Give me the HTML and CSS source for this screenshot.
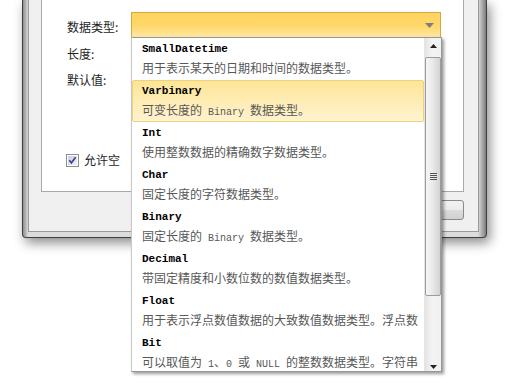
FILE: index.html
```html
<!DOCTYPE html>
<html lang="zh-CN">
<head>
  <meta charset="UTF-8" />
  <title>数据类型</title>
  <link rel="stylesheet" href="styles.css">
</head>
<body>
  <div class="scene">
    <div class="window">
      <div class="client">
        <div class="group">
          <div class="fields">
            <div class="lbl first">数据类型:</div>
            <div class="combo-cell">
              <div class="combo">
                <svg class="combo-arrow" width="9" height="5" viewBox="0 0 9 5"><polygon points="0,0 9,0 4.5,5" fill="#7d7d7d"/></svg>
              </div>

              <!-- open drop-down list -->
              <div class="dropdown">
                <div class="list">
                  <div class="item">
                    <div class="title">SmallDatetime</div>
                    <div class="desc">用于表示某天的日期和时间的数据类型。</div>
                  </div>
                  <div class="item sel">
                    <div class="title">Varbinary</div>
                    <div class="desc">可变长度的<span class="m"> Binary </span>数据类型。</div>
                  </div>
                  <div class="item">
                    <div class="title">Int</div>
                    <div class="desc">使用整数数据的精确数字数据类型。</div>
                  </div>
                  <div class="item">
                    <div class="title">Char</div>
                    <div class="desc">固定长度的字符数据类型。</div>
                  </div>
                  <div class="item">
                    <div class="title">Binary</div>
                    <div class="desc">固定长度的<span class="m"> Binary </span>数据类型。</div>
                  </div>
                  <div class="item">
                    <div class="title">Decimal</div>
                    <div class="desc">带固定精度和小数位数的数值数据类型。</div>
                  </div>
                  <div class="item">
                    <div class="title">Float</div>
                    <div class="desc">用于表示浮点数值数据的大致数值数据类型。浮点数</div>
                  </div>
                  <div class="item">
                    <div class="title">Bit</div>
                    <div class="desc">可以取值为<span class="m"> 1</span>、<span class="m">0 </span>或<span class="m"> NULL </span>的整数数据类型。字符串</div>
                  </div>
                </div>
                <div class="sb">
                  <div class="sb-btn up">
                    <svg width="7" height="4" viewBox="0 0 7 4"><polygon points="3.5,0 7,4 0,4" fill="#222"/></svg>
                  </div>
                  <div class="sb-thumb">
                    <svg width="7" height="8" viewBox="0 0 7 8">
                      <path d="M0 0.5H7M0 2.5H7M0 4.5H7M0 6.5H7" stroke="#555" stroke-width="1"/>
                    </svg>
                  </div>
                  <div class="sb-fill"></div>
                  <div class="sb-btn down">
                    <svg width="7" height="4" viewBox="0 0 7 4"><polygon points="0,0 7,0 3.5,4" fill="#222"/></svg>
                  </div>
                </div>
              </div>
            </div>
            <div class="lbl">长度:</div>
            <div></div>
            <div class="lbl">默认值:</div>
            <div></div>
          </div>

          <div class="check-row">
            <svg class="checkbox" width="13" height="13" viewBox="0 0 13 13">
              <defs>
                <linearGradient id="cb" x1="0" y1="0" x2="1" y2="1">
                  <stop offset="0" stop-color="#c6cbe0"/>
                  <stop offset="1" stop-color="#f2f3fa"/>
                </linearGradient>
              </defs>
              <rect x="0.5" y="0.5" width="12" height="12" fill="#fff" stroke="#8e8f8f"/>
              <rect x="2" y="2" width="9" height="9" fill="url(#cb)"/>
              <path d="M3.3 6.3 L5.4 8.8 L9.6 3.2" fill="none" stroke="#45438f" stroke-width="1.7"/>
            </svg>
            <span>允许空</span>
          </div>
        </div>

        <div class="buttons">
          <div class="btn"></div>
        </div>
      </div>
    </div>
  </div>
</body>
</html>
```

FILE: styles.css
```css
* {
  box-sizing: border-box;
}
body {
  margin: 0;
  background: #fff;
  font-family: "Noto Sans CJK SC", sans-serif;
  font-size: 12px;
  color: #1e1e1e;
  overflow: hidden;
}
.scene {
  position: relative;
  width: 520px;
  height: 383px;
}

/* dialog frame */
.window {
  margin-left: 22px;
  width: 465px;
  height: 238px;
  border: 1px solid #3f3f3f;
  border-top: none;
  border-radius: 0 0 4px 4px;
  background: linear-gradient(to right, #8e8e8e 0, #c8c8c8 4px, #dcdcdc 5px, #dcdcdc calc(100% - 8px), #a2a2a2 calc(100% - 3px), #7c7c7c 100%);
  padding: 0 7px 5px 5px;
  box-shadow: 3px 5px 12px rgba(0,0,0,0.45);
}
.client {
  height: 100%;
  border: 1px solid #9a9a9a;
  border-top: none;
  background: #f0f0f0;
  padding: 0 14px 0 12px;
  display: flex;
  flex-direction: column;
}
.group {
  height: 192px;
  border: 1px solid #a9a9a9;
  border-top: none;
  background: #fff;
  padding: 12px 0 0 25px;
}
.fields {
  display: grid;
  grid-template-columns: 64px 310px;
  grid-template-rows: 34px 26px 26px;
  align-items: start;
}
.lbl {
  line-height: 16px;
}
.lbl.first {
  padding-top: 7px;
}

/* combobox */
.combo-cell {
  position: relative;
}
.combo {
  height: 26px;
  border: 1px solid #d3a849;
  background: linear-gradient(#ffd35d, #ffd86b 55%, #ffe7a3);
  display: flex;
  align-items: center;
  justify-content: flex-end;
  padding-right: 6px;
}
.combo-arrow {
  margin-top: 1px;
}

/* drop-down */
.dropdown {
  position: absolute;
  left: 0;
  top: 25px;
  width: 311px;
  height: 335px;
  border: 1px solid #979797;
  border-left-color: #c8c8c8;
  background: #fff;
  box-shadow: 2px 2px 3px rgba(0,0,0,0.4);
  display: flex;
  z-index: 5;
}
.list {
  width: 292px;
  overflow: hidden;
}
.item {
  height: 42px;
  padding: 3px 0 0 10px;
  white-space: nowrap;
}
.item.sel {
  background: linear-gradient(#fde597, #fff3d0);
  border: 1px solid #f1d07a;
  border-radius: 2px;
  padding: 2px 0 0 9px;
}
.title {
  font: bold 11px/16px "Liberation Mono", monospace;
  color: #000;
}
.desc {
  margin-top: 2px;
  line-height: 18px;
  color: #575757;
}
.m {
  font: 10px "Liberation Mono", monospace;
}

/* scrollbar */
.sb {
  width: 17px;
  border-left: 1px solid #e4e4e4;
  background: linear-gradient(to right, #e4e4e4, #f4f4f4 45%, #f0f0f0);
  display: flex;
  flex-direction: column;
}
.sb-btn {
  height: 18px;
  display: flex;
  justify-content: center;
}
.sb-btn.up {
  align-items: flex-start;
  padding-top: 6px;
}
.sb-btn.down {
  align-items: flex-end;
  padding-bottom: 2px;
}
.sb-thumb {
  margin-top: 1px;
  height: 239px;
  border: 1px solid #9c9c9c;
  border-radius: 2px;
  background: linear-gradient(to right, #f6f6f6, #e8e8e8 50%, #d3d3d3);
  display: flex;
  align-items: center;
  justify-content: center;
}
.sb-fill {
  flex: 1;
}

/* checkbox */
.check-row {
  margin: 54px 0 0 -1px;
  display: flex;
  align-items: center;
  gap: 5px;
  line-height: 16px;
}

/* bottom button */
.buttons {
  display: flex;
  justify-content: flex-end;
  margin-top: 8px;
}
.btn {
  width: 75px;
  height: 20px;
  border: 1px solid #8a8a8a;
  border-radius: 3px;
  background: linear-gradient(#f3f3f3, #ebebeb 50%, #dcdcdc 51%, #d0d0d0);
}
```
